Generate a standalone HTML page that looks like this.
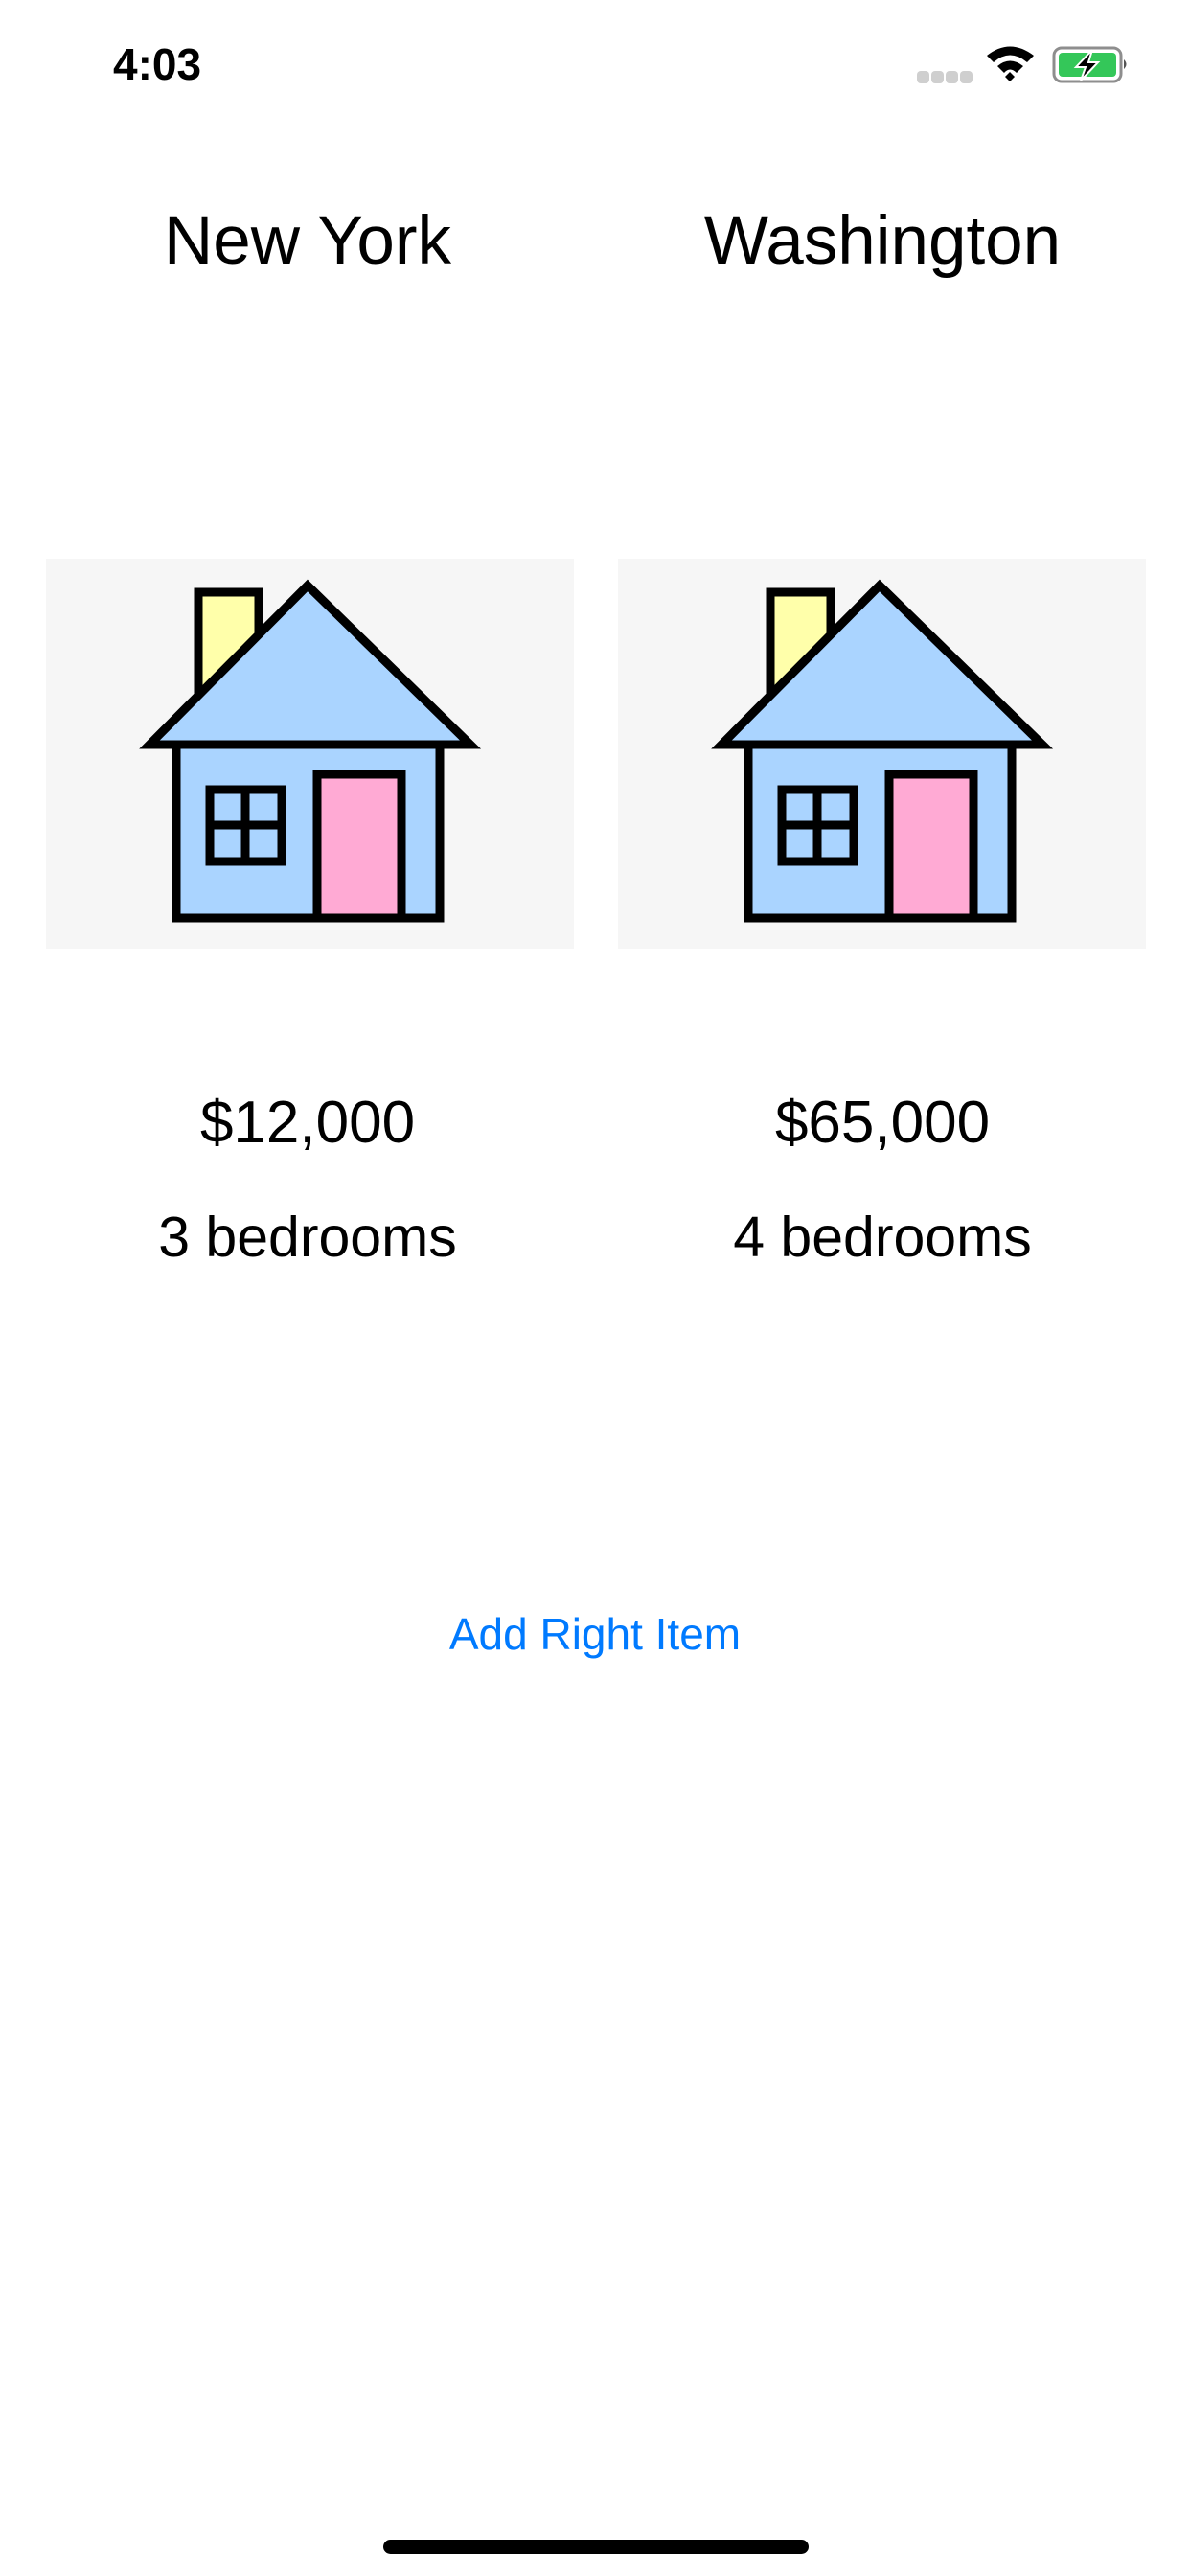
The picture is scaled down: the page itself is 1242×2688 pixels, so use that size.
<!DOCTYPE html>
<html><head><meta charset="utf-8"><style>
body{margin:0;width:1242px;height:2688px;background:#fff;position:relative;font-family:"Liberation Sans",sans-serif;overflow:hidden}
.t{position:absolute;text-align:center;color:#000;white-space:nowrap}
.box{position:absolute;top:583px;width:551px;height:407px;background:#f6f6f6}
</style></head><body>
<div class="t" style="left:118px;top:40px;font-size:46px;font-weight:bold;text-align:left">4:03</div>
<svg style="position:absolute;left:950px;top:40px" width="240" height="60" viewBox="0 0 240 60">
<g fill="#cfcfcf"><rect x="7" y="34" width="13" height="13" rx="4"/><rect x="22" y="34" width="13" height="13" rx="4"/><rect x="37" y="34" width="13" height="13" rx="4"/><rect x="52" y="34" width="13" height="13" rx="4"/></g>
<path d="M80 18 Q104 -1 129 18 L122 25 Q104 10 87 25Z M91 29 Q104 18 118 29 L111 36 Q104 29 98 36Z M99 40 L104 35 L109 40 L104 45Z" fill="#000"/>
<rect x="150" y="10" width="70" height="35" rx="8" fill="none" stroke="#8e8e8e" stroke-width="3"/>
<rect x="155" y="15" width="60" height="25" rx="4" fill="#34c759"/>
<path d="M223 22 q5 5 0 10z" fill="#555"/>
<path d="M190 12 L173 30 L183 30 L178 44 L196 25 L186 25Z" fill="#000" stroke="#fff" stroke-width="2"/>
</svg>
<div class="t" style="left:21px;width:600px;top:211px;font-size:71px">New York</div>
<div class="t" style="left:621px;width:600px;top:211px;font-size:71px">Washington</div>
<div class="box" style="left:48px"></div>
<div class="box" style="left:645px"></div>
<svg style="position:absolute;left:48px;top:583px" width="551" height="407"><g id="h" stroke="#000" stroke-width="9" stroke-linejoin="miter">
<rect x="159" y="35" width="63" height="120" fill="#ffffaa"/>
<rect x="136" y="190" width="275" height="185" fill="#aad4ff"/>
<polygon points="108,194 273,28 443,194" fill="#aad4ff"/>
<rect x="171" y="241" width="75" height="75" fill="#aad4ff"/>
<path d="M208 241V316M171 278H246" fill="none"/>
<rect x="283" y="225" width="88" height="150" fill="#ffaad4"/>
</g></svg>
<svg style="position:absolute;left:645px;top:583px" width="551" height="407"><use href="#h"/></svg>
<div class="t" style="left:21px;width:600px;top:1136px;font-size:62px">$12,000</div>
<div class="t" style="left:621px;width:600px;top:1136px;font-size:62px">$65,000</div>
<div class="t" style="left:21px;width:600px;top:1257px;font-size:59px">3 bedrooms</div>
<div class="t" style="left:621px;width:600px;top:1257px;font-size:59px">4 bedrooms</div>
<div class="t" style="left:321px;width:600px;top:1678px;font-size:46px;color:#007aff">Add Right Item</div>
<div style="position:absolute;left:400px;top:2650px;width:444px;height:15px;border-radius:8px;background:#000"></div>
</body></html>
